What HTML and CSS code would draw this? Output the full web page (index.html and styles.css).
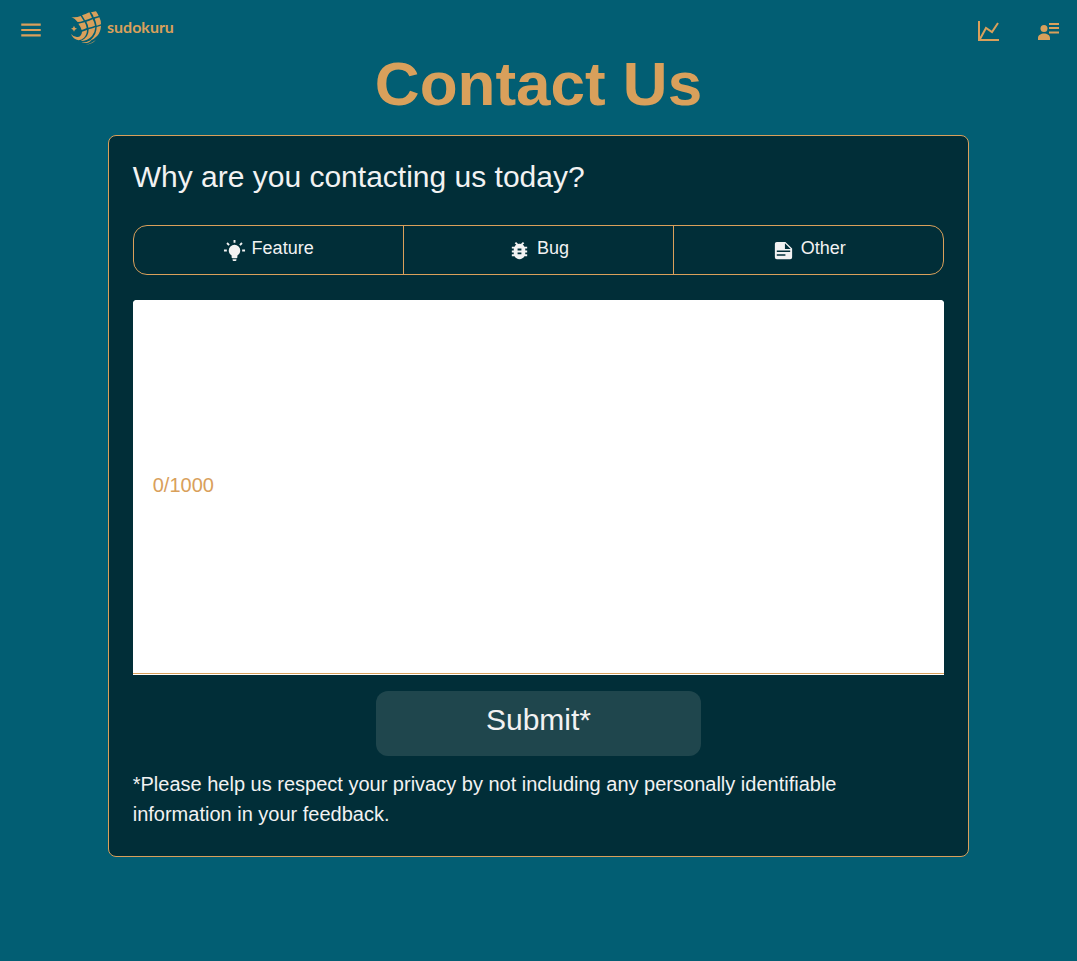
FILE: index.html
```html
<!DOCTYPE html>
<html lang="en">
<head>
<meta charset="utf-8">
<meta name="viewport" content="width=device-width, initial-scale=1">
<title>Contact Us - Sudokuru</title>
<link rel="stylesheet" href="styles.css">
</head>
<body>
<header class="topbar">
  <button class="icon-button" type="button" aria-label="Menu">
    <svg width="26" height="26" viewBox="0 0 24 24"><path d="M3 6h18v2H3zM3 11h18v2H3zM3 16h18v2H3z"/></svg>
  </button>
  <a class="brand" href="#">
    <svg class="brand-mark" width="32" height="34" viewBox="210 33 96 102">
      <path d="M214 51Q229 53 242 48L251 62Q241 66 233 66Q226 56 214 51Z"/>
      <path d="M246 46Q256 43 268 37L276 53Q264 58 255 61Z"/>
      <path d="M273 37L288 34Q293 41 296 48L281 52Q279 44 273 37Z"/>
      <path d="M235 71Q245 70 254 67Q259 75 260 84Q251 88 245 90Q242 80 235 71Z"/>
      <path d="M259 65Q267 63 278 58Q284 68 285 77Q274 81 265 83Q264 74 259 65Z"/>
      <path d="M284 56L298 52Q303 61 303 73L290 77Q288 66 284 56Z"/>
      <path d="M246 95L261 90Q261 104 252 113Q245 119 236 121Q219 118 213 102Q222 113 234 111Q245 108 246 95Z"/>
      <path d="M266 88Q275 87 286 82Q285 97 276 108Q263 123 242 123Q254 118 261 108Q266 100 266 88Z"/>
      <path d="M290 81L303 77Q302 96 292 107Q282 118 270 122Q281 112 286 101Q290 92 290 81Z"/>
      <path d="M244 128Q262 127 275 119Q271 125 264 128Q254 130 244 128ZM256 133Q274 131 288 119Q277 133 256 133Z"/>
      <path d="M222 77Q223 84 231 86Q223 88 222 95Q221 88 213 86Q221 84 222 77Z"/>
    </svg>
    <span class="brand-name">sudokuru</span>
  </a>
  <nav class="actions" aria-label="Account">
    <button class="action" type="button" aria-label="Statistics">
      <svg width="22" height="20" viewBox="0 0 22 20" class="stroked"><path d="M2 0V19H22M3 18L9 7L15 11L21 2"/></svg>
    </button>
    <button class="action" type="button" aria-label="Profile">
      <svg width="22" height="18" viewBox="0 0 22 18"><circle cx="7" cy="6.500" r="3.500"/><path d="M1 18V16C1 13 4 11.500 7 11.500S13 13 13 16V18ZM12 1H22V3H12ZM12 5H22V7H12ZM12 9.500H22V11.500H12Z"/></svg>
    </button>
  </nav>
</header>
<main class="page">
  <h1 class="title">Contact Us</h1>
  <form class="card">
    <h2 class="question" id="reason">Why are you contacting us today?</h2>
    <div class="reasons" role="group" aria-labelledby="reason">
      <button class="reason" type="button">
        <svg width="23" height="23" viewBox="0 0 24 24"><path d="M12,6A6,6 0 0,1 18,12C18,14.22 16.79,16.16 15,17.2V19A1,1 0 0,1 14,20H10A1,1 0 0,1 9,19V17.2C7.21,16.16 6,14.22 6,12A6,6 0 0,1 12,6M14,21V22A1,1 0 0,1 13,23H11A1,1 0 0,1 10,22V21H14M20,11H23V13H20V11M1,11H4V13H1V11M13,1V4H11V1H13M4.92,3.5L7.05,5.64L5.63,7.05L3.5,4.93L4.92,3.5M16.95,5.63L19.07,3.5L20.5,4.93L18.37,7.05L16.95,5.63Z"/></svg>
        <span class="reason-label">Feature</span>
      </button>
      <button class="reason" type="button">
        <svg width="23" height="23" viewBox="0 0 24 24"><path d="M14,12H10V10H14M14,16H10V14H14M20,8H17.19C16.74,7.22 16.12,6.55 15.37,6.04L17,4.41L15.59,3L13.42,5.17C12.96,5.06 12.5,5 12,5C11.5,5 11.05,5.06 10.59,5.17L8.41,3L7,4.41L8.62,6.04C7.88,6.55 7.26,7.22 6.81,8H4V10H6.09C6.04,10.33 6,10.66 6,11V12H4V14H6V15C6,15.34 6.04,15.67 6.09,16H4V18H6.81C7.85,19.79 9.78,21 12,21C14.22,21 16.15,19.79 17.19,18H20V16H17.91C17.96,15.67 18,15.34 18,15V14H20V12H18V11C18,10.66 17.96,10.33 17.91,10H20V8Z"/></svg>
        <span class="reason-label">Bug</span>
      </button>
      <button class="reason" type="button">
        <svg width="23" height="23" viewBox="0 0 24 24"><path fill-rule="evenodd" d="M5 3H14L21 10V19A2 2 0 0 1 19 21H5A2 2 0 0 1 3 19V5A2 2 0 0 1 5 3ZM13.500 4.500V10.500H19.500ZM5 12V13.500H19V12ZM5 16V17.500H14V16Z"/></svg>
        <span class="reason-label">Other</span>
      </button>
    </div>
    <div class="field">
      <textarea class="message" id="message" maxlength="1000"></textarea>
      <label class="counter" for="message">0/1000</label>
    </div>
    <button class="submit" type="submit">Submit*</button>
    <p class="note">*Please help us respect your privacy by not including any personally identifiable information in your feedback.</p>
  </form>
</main>
</body>
</html>
```
FILE: styles.css
```css
:root {
  --teal: #025e73;
  --dark: #012e38;
  --gold: #d9a05b;
  --light: #f2f2f2;
}

* {
  box-sizing: border-box;
}

body {
  margin: 0;
  background: var(--teal);
  color: var(--light);
  font-family: "Liberation Sans", Arial, sans-serif;
}

button {
  margin: 0;
  padding: 0;
  border: 0;
  background: none;
  color: inherit;
  font: inherit;
  cursor: pointer;
}

svg {
  display: block;
  flex: none;
  fill: currentColor;
}

.topbar {
  display: flex;
  align-items: center;
  height: 60px;
  color: var(--gold);
}

.icon-button {
  display: flex;
  align-items: center;
  justify-content: center;
  width: 61px;
  height: 61px;
}

.stroked {
  fill: none;
  stroke: currentColor;
  stroke-width: 2;
}

.brand {
  display: flex;
  align-items: center;
  gap: 5px;
  height: 56px;
  padding-left: 9px;
  align-self: flex-start;
  color: inherit;
  text-decoration: none;
}

.brand-name {
  padding-bottom: 2px;
  font-family: Lato, sans-serif;
  font-size: 16px;
  font-weight: 700;
  line-height: 20px;
}

.actions {
  display: flex;
  align-items: center;
  gap: 38px;
  margin-left: auto;
  padding: 1px 18px 0 0;
}

.page {
  display: flex;
  flex-direction: column;
  align-items: center;
  padding-bottom: 24px;
}

.title {
  margin: 0 0 27px;
  color: var(--gold);
  font-size: 62px;
  line-height: 48px;
}

.card {
  display: flex;
  flex-direction: column;
  width: 80%;
  padding: 24px 24px 27px;
  border: 1px solid var(--gold);
  border-radius: 8px;
  background: var(--dark);
}

.question {
  margin: 0 0 31px;
  font-size: 30px;
  font-weight: 400;
  line-height: 34px;
}

.reasons {
  display: grid;
  grid-template-columns: repeat(3, 1fr);
  margin-bottom: 25px;
  border: 1px solid var(--gold);
  border-radius: 14px;
}

.reason {
  display: flex;
  align-items: center;
  justify-content: center;
  gap: 6px;
  height: 48px;
  font-size: 18px;
}

.reason:first-child {
  border-right: 1px solid var(--gold);
}

.reason:last-child {
  border-left: 1px solid var(--gold);
}

.reason-label {
  padding-bottom: 4px;
}

.field {
  position: relative;
  display: flex;
  margin-bottom: 16px;
  padding-bottom: 1px;
  border-radius: 4px 4px 0 0;
  background: #fff;
}

.message {
  width: 100%;
  height: 374px;
  padding: 20px;
  border: 0;
  border-bottom: 1px solid var(--gold);
  border-radius: 4px 4px 0 0;
  background: #fff;
  color: var(--gold);
  font: inherit;
  font-size: 20px;
  resize: none;
}

.counter {
  position: absolute;
  top: 0;
  bottom: 4px;
  left: 20px;
  display: flex;
  align-items: center;
  color: var(--gold);
  font-size: 20px;
}

.submit {
  align-self: center;
  width: 40%;
  height: 65px;
  padding-bottom: 8px;
  border-radius: 12px;
  background: #1f464d;
  font-size: 30px;
}

.note {
  margin: 13px 0 0;
  padding-right: 24px;
  font-size: 20px;
  line-height: 30px;
}
```
